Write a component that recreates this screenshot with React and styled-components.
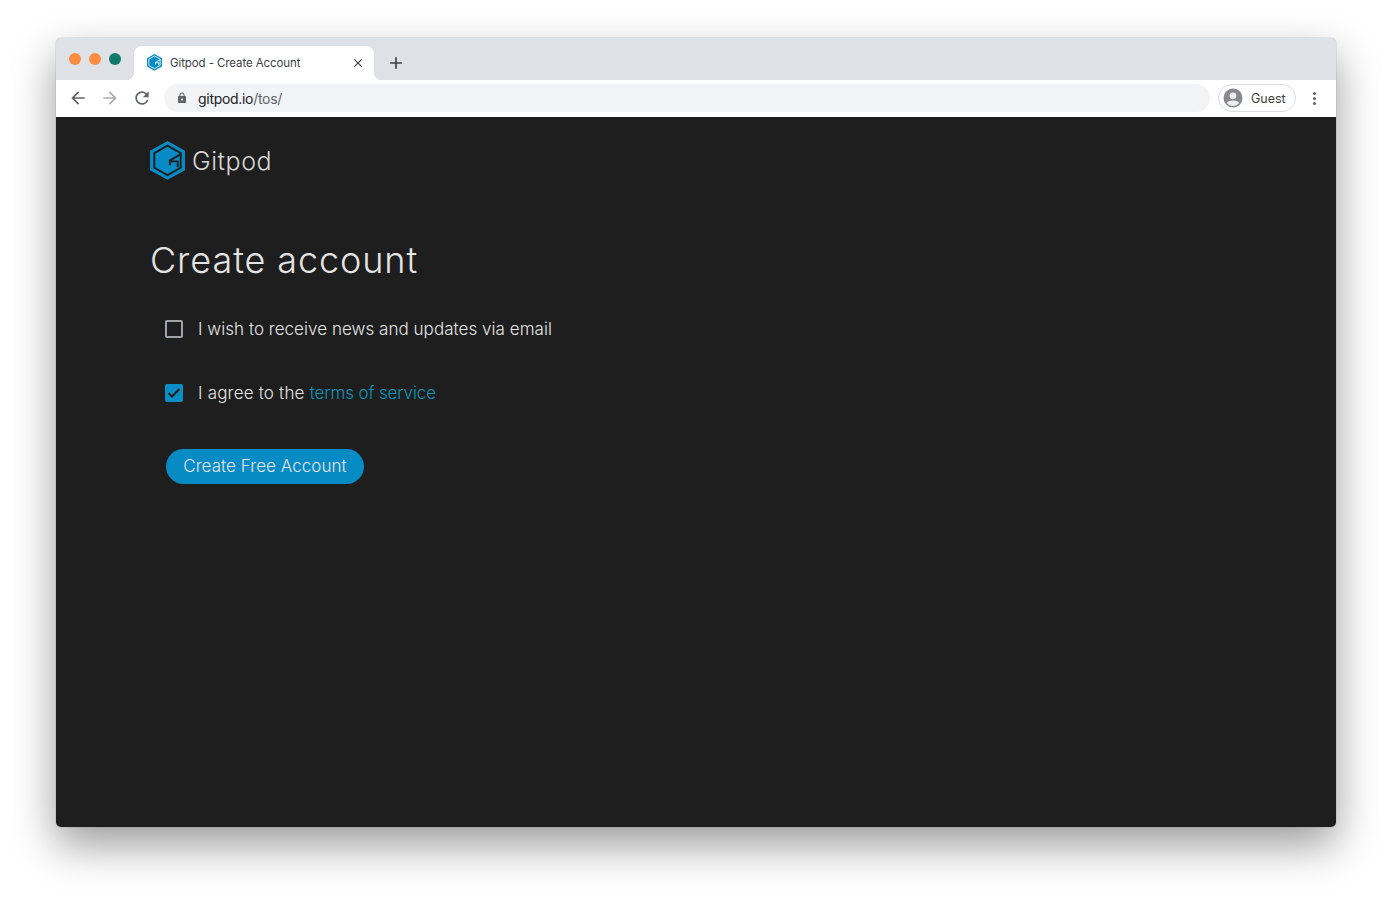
import styled, { createGlobalStyle } from 'styled-components'
import { MdArrowBack, MdArrowForward, MdRefresh, MdLock, MdClose, MdAdd } from 'react-icons/md'

const Global = createGlobalStyle`
    html, body {
        margin: 0;
        background: #ffffff;
    }
`

const Page = styled.div`
    width: 1392px;
    height: 901px;
    box-sizing: border-box;
    padding: 38px 56px 74px;
    overflow: hidden;
`

const Window = styled.div`
    height: 789px;
    display: flex;
    flex-direction: column;
    border-radius: 5px;
    overflow: hidden;
    box-shadow: 0 18px 44px rgba(0, 0, 0, 0.4), 0 0 1px rgba(0, 0, 0, 0.6);
`

const TabStrip = styled.div`
    height: 42px;
    flex-shrink: 0;
    display: flex;
    align-items: flex-end;
    background: #dee1e6;
`

const Lights = styled.div`
    display: flex;
    gap: 8px;
    align-self: flex-start;
    padding: 15px 13px 0;
`

const Light = styled.span`
    width: 12px;
    height: 12px;
    border-radius: 50%;
    background: ${ ( { $color } ) => $color };
`

const Tab = styled.div`
    position: relative;
    width: 240px;
    height: 34px;
    box-sizing: border-box;
    display: flex;
    align-items: center;
    padding: 0 9px 1px 13px;
    background: #ffffff;
    border-radius: 8px 8px 0 0;
    color: #3c4043;
    font: 11.5px "Inter", sans-serif;
    letter-spacing: -0.1px;

    &::before, &::after {
        content: '';
        position: absolute;
        bottom: 0;
        width: 8px;
        height: 8px;
        background: radial-gradient(circle at var(--cx) 0, transparent 8px, #ffffff 8.5px);
    }

    &::before {
        --cx: 0;
        left: -8px;
    }

    &::after {
        --cx: 100%;
        right: -8px;
    }
`

const TabTitle = styled.span`
    flex: 1;
    margin-left: 8px;
`

const NewTab = styled.div`
    display: flex;
    align-items: center;
    height: 34px;
    padding-left: 12px;
    color: #3c4043;
`

const Toolbar = styled.div`
    height: 37px;
    flex-shrink: 0;
    box-sizing: border-box;
    display: flex;
    align-items: center;
    background: #ffffff;
    padding: 0 20px 1px 12px;
`

const NavButton = styled.div`
    width: 20px;
    display: flex;
    justify-content: center;
    margin-right: 12px;
    color: ${ ( { $off } ) => $off ? `#a9acb0` : `#5f6368` };
`

const Omnibox = styled.div`
    flex: 1;
    height: 28px;
    display: flex;
    align-items: center;
    gap: 10px;
    padding-left: 12px;
    border-radius: 14px;
    background: #f1f3f4;
    color: #5f6368;
    font: 14px "Inter", sans-serif;
    letter-spacing: -0.3px;
`

const Host = styled.span`
    color: #202124;
`

const Profile = styled.div`
    width: 78px;
    height: 28px;
    box-sizing: border-box;
    margin-left: 8px;
    display: flex;
    align-items: center;
    gap: 8px;
    padding-left: 4px;
    border: 1px solid #dadce0;
    border-radius: 14px;
    color: #3c4043;
    font: 12.5px "Inter", sans-serif;
`

const Menu = styled.div`
    display: flex;
    flex-direction: column;
    gap: 2px;
    margin-left: 17px;
`

const Dot = styled.span`
    width: 3px;
    height: 3px;
    border-radius: 50%;
    background: #5f6368;
`

const Content = styled.main`
    flex: 1;
    display: flex;
    flex-direction: column;
    align-items: flex-start;
    padding: 24px 0 0 94px;
    background: #1e1e1e;
    color: #e4e4e4;
    font-family: "Inter", "Lato", sans-serif;
`

const Brand = styled.div`
    display: flex;
    align-items: center;
    gap: 7px;
`

const BrandName = styled.span`
    padding-top: 2px;
    font-size: 25px;
    font-weight: 300;
    letter-spacing: 0.55px;
    color: #d6d6d6;
`

const Title = styled.h1`
    margin: 58px 0 0;
    font-size: 36px;
    line-height: 44px;
    font-weight: 300;
    letter-spacing: 0.9px;
    color: #e4e4e4;
`

const Options = styled.div`
    display: flex;
    flex-direction: column;
    gap: 40px;
    margin: 35px 0 0 15px;
`

const Option = styled.label`
    height: 24px;
    display: flex;
    align-items: center;
    gap: 15px;
    font-size: 17px;
    font-weight: 300;
    letter-spacing: 0.04px;
`

const Lead = styled.span`
    letter-spacing: 0.2px;
`

const Box = styled.span`
    width: 18px;
    height: 18px;
    box-sizing: border-box;
    display: flex;
    align-items: center;
    justify-content: center;
    border: ${ ( { $checked } ) => $checked ? `none` : `2px solid #a0a4a8` };
    border-radius: 2px;
    background: ${ ( { $checked } ) => $checked ? `#0b8ec5` : `transparent` };
`

const Link = styled.a`
    color: #0a96bb;
    letter-spacing: -0.1px;
`

const Button = styled.button`
    width: 198px;
    height: 35px;
    margin: 44px 0 0 16px;
    padding: 0;
    border: none;
    border-radius: 18px;
    background: #068bc4;
    color: #e4e4e4;
    font: 300 17px "Inter", sans-serif;
    letter-spacing: 0.05px;
`

// the gap colour follows whatever the mark sits on
const GitpodMark = ( { size, gap } ) => <svg width={ size } height={ size * 1.11 } viewBox="0 0 36 40" fill="none">
    <path d="M18 0 L36 10 V30 L18 40 L0 30 V10 Z" fill="#068bc4" />
    <path d="M18 4.8 L31.6 12.4 V27.6 L18 35.2 L4.4 27.6 V12.4 Z" stroke={ gap } strokeWidth="2" />
    <path d="M32 13.5 L20.5 20 V25 M20.5 21 H28.5 V27" stroke={ gap } strokeWidth="2" />
</svg>

const Avatar = () => <svg width="20" height="20" viewBox="0 0 20 20">
    <circle cx="10" cy="10" r="9.5" fill="#85898e" />
    <circle cx="10" cy="7.8" r="3.4" fill="#eceef0" />
    <path d="M3.8 15 C5.5 11.8 14.5 11.8 16.2 15 C14.6 17 12.4 18 10 18 C7.6 18 5.4 17 3.8 15 Z" fill="#eceef0" />
</svg>

export default function App() {

    return <Page>
        <Global />
        <Window>
            <TabStrip>
                <Lights>
                    <Light $color="#fc8c42" />
                    <Light $color="#fc8c42" />
                    <Light $color="#12796b" />
                </Lights>
                <Tab>
                    <GitpodMark size={ 15 } gap="#ffffff" />
                    <TabTitle>Gitpod - Create Account</TabTitle>
                    <MdClose size={ 14 } />
                </Tab>
                <NewTab><MdAdd size={ 20 } /></NewTab>
            </TabStrip>
            <Toolbar>
                <NavButton><MdArrowBack size={ 24 } /></NavButton>
                <NavButton $off><MdArrowForward size={ 24 } /></NavButton>
                <NavButton><MdRefresh size={ 22 } /></NavButton>
                <Omnibox>
                    <MdLock size={ 12 } />
                    <span><Host>gitpod.io</Host>/tos/</span>
                </Omnibox>
                <Profile><Avatar /><span>Guest</span></Profile>
                <Menu><Dot /><Dot /><Dot /></Menu>
            </Toolbar>
            <Content>
                <Brand>
                    <GitpodMark size={ 35 } gap="#1e1e1e" />
                    <BrandName>Gitpod</BrandName>
                </Brand>
                <Title>Create account</Title>
                <Options>
                    <Option><Box />I wish to receive news and updates via email</Option>
                    <Option>
                        <Box $checked>
                            <svg width="14" height="12" viewBox="0 0 14 12" fill="none">
                                <path d="M1.5 6 L5 9.5 L12.5 2" stroke="#1e1e1e" strokeWidth="2" />
                            </svg>
                        </Box>
                        <span><Lead>I agree to the </Lead><Link>terms of service</Link></span>
                    </Option>
                </Options>
                <Button>Create Free Account</Button>
            </Content>
        </Window>
    </Page>

}
